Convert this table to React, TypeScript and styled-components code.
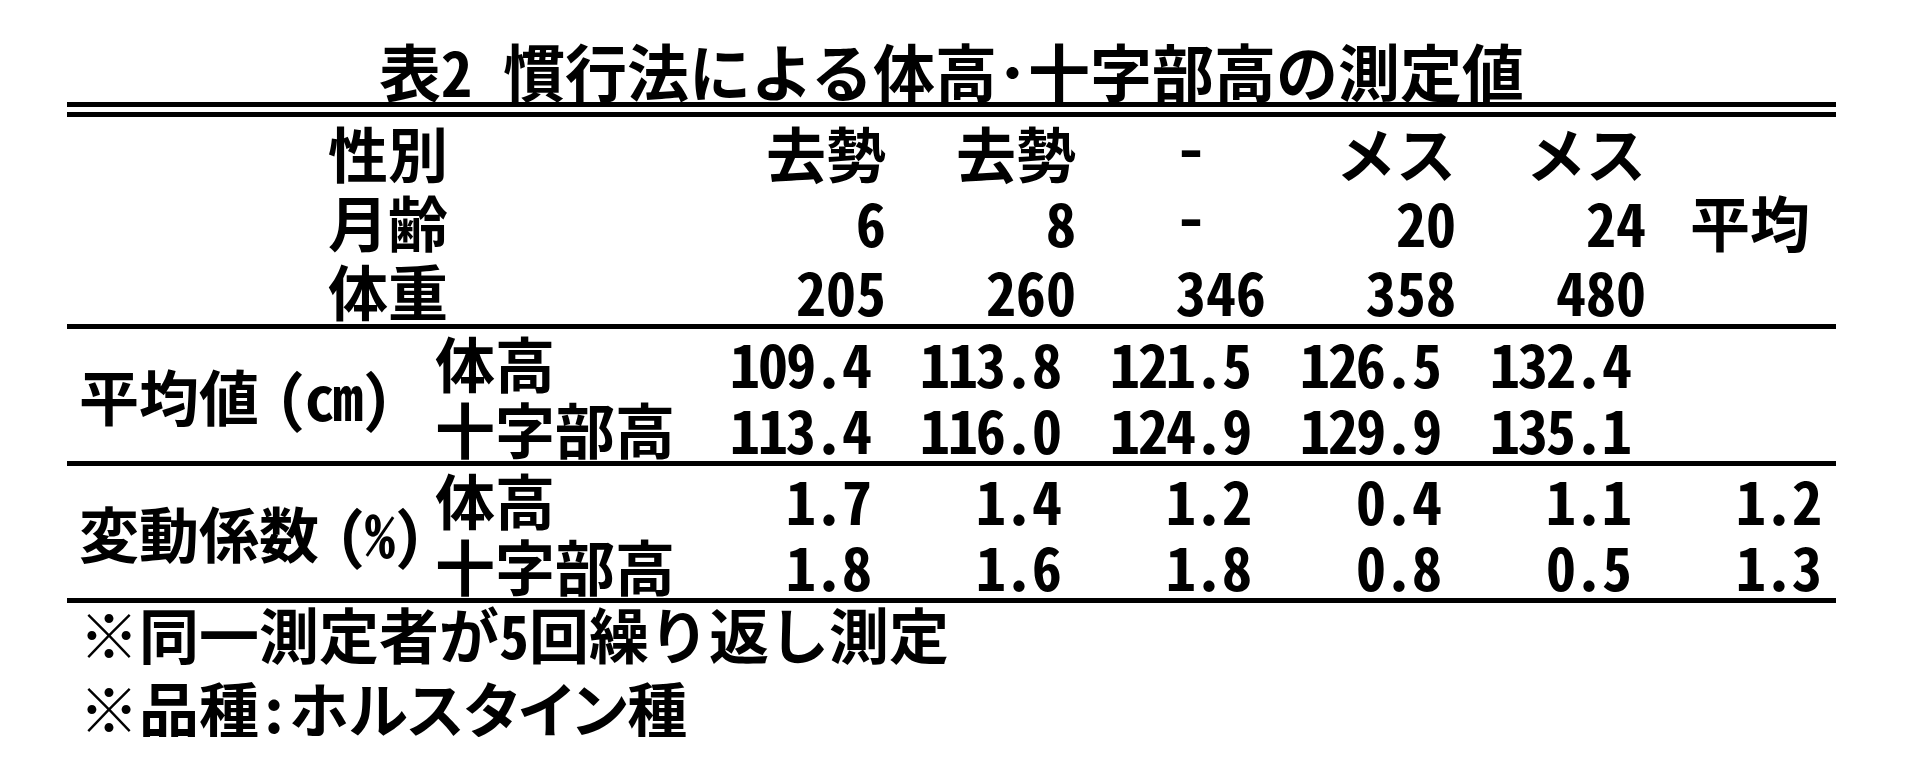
import React from "react";
import styled, { createGlobalStyle } from "styled-components";

const GlobalStyle = createGlobalStyle`
  html, body {
    margin: 0;
    background: #ffffff;
  }
  body {
    font-family: "Noto Sans CJK JP", "Noto Sans CJK SC", sans-serif;
    font-feature-settings: "hwid" 1;
    font-weight: 700;
    color: #000000;
  }
`;

const header = [
  { label: "性別", values: ["去勢", "去勢", "-", "メス", "メス", ""] },
  { label: "月齢", values: ["6", "8", "-", "20", "24", "平均"] },
  { label: "体重", values: ["205", "260", "346", "358", "480", ""] },
];

const groups = [
  {
    label: "平均値",
    unit: "(cm)",
    rows: [
      { name: "体高", values: ["109.4", "113.8", "121.5", "126.5", "132.4", ""] },
      { name: "十字部高", values: ["113.4", "116.0", "124.9", "129.9", "135.1", ""] },
    ],
  },
  {
    label: "変動係数",
    unit: "(%)",
    rows: [
      { name: "体高", values: ["1.7", "1.4", "1.2", "0.4", "1.1", "1.2"] },
      { name: "十字部高", values: ["1.8", "1.6", "1.8", "0.8", "0.5", "1.3"] },
    ],
  },
];

const App = () => {
  return (
    <Page>
      <GlobalStyle />
      <Title>表2　慣行法による体高･十字部高の測定値</Title>
      <DoubleRule />
      <Section $row={69}>
        {header.map((r) => (
          <React.Fragment key={r.label}>
            <HeadLabel>{r.label}</HeadLabel>
            {r.values.map((v, i) => {
              if (v === "-") return <Dash key={i}>{v}</Dash>;
              if (v === "平均") return <Average key={i}>{v}</Average>;
              return <Value key={i}>{v}</Value>;
            })}
          </React.Fragment>
        ))}
      </Section>
      {groups.map((g) => (
        <Section $row={66} key={g.label}>
          <GroupLabel>
            {g.label}
            <Unit>{g.unit}</Unit>
          </GroupLabel>
          {g.rows.map((r) => (
            <React.Fragment key={r.name}>
              <SubLabel>{r.name}</SubLabel>
              {r.values.map((v, i) => (
                <Value key={i} $data>
                  {v}
                </Value>
              ))}
            </React.Fragment>
          ))}
        </Section>
      ))}
      <Notes>
        <Note>※同一測定者が5回繰り返し測定</Note>
        <Note>
          ※品種:<Kana>ホルスタイン</Kana>種
        </Note>
      </Notes>
    </Page>
  );
};

export default App;

const Page = styled.div`
  width: 1769px;
  padding: 38px 0 0 67px;
  font-size: 60px;
  white-space: nowrap;
`;

const Title = styled.div`
  height: 64px;
  line-height: 64px;
  font-size: 62px;
  text-align: center;
`;

const DoubleRule = styled.div`
  height: 5px;
  border-top: 5px solid #000;
  border-bottom: 5px solid #000;
`;

const Section = styled.div<{ $row: number }>`
  display: grid;
  grid-template-columns: 368px 261px repeat(6, 190px);
  grid-auto-rows: ${(p) => p.$row}px;
  line-height: ${(p) => p.$row}px;
  border-bottom: 5px solid #000;
`;

const HeadLabel = styled.div`
  grid-column: 1 / span 2;
  padding-left: 261px;
`;

const Value = styled.div<{ $data?: boolean }>`
  text-align: right;
  padding-right: ${(p) => (p.$data ? 16 : 0)}px;
  letter-spacing: ${(p) => (p.$data ? -2 : 0)}px;
`;

const Dash = styled.div`
  padding-left: 100px;
  line-height: 56px;
`;

const Average = styled.div`
  padding-left: 44px;
`;

const GroupLabel = styled.div`
  grid-column: 1;
  grid-row: 1 / span 2;
  align-self: center;
  padding-left: 12px;
`;

const Unit = styled.span`
  margin-left: 18px;
  letter-spacing: -2px;
`;

const SubLabel = styled.div`
  grid-column: 2;
`;

const Notes = styled.div`
  display: flex;
  flex-direction: column;
  gap: 14px;
`;

const Note = styled.div`
  line-height: 60px;
  padding-left: 12px;
`;

const Kana = styled.span`
  font-feature-settings: "hwid" 1, "palt" 1;
`;
